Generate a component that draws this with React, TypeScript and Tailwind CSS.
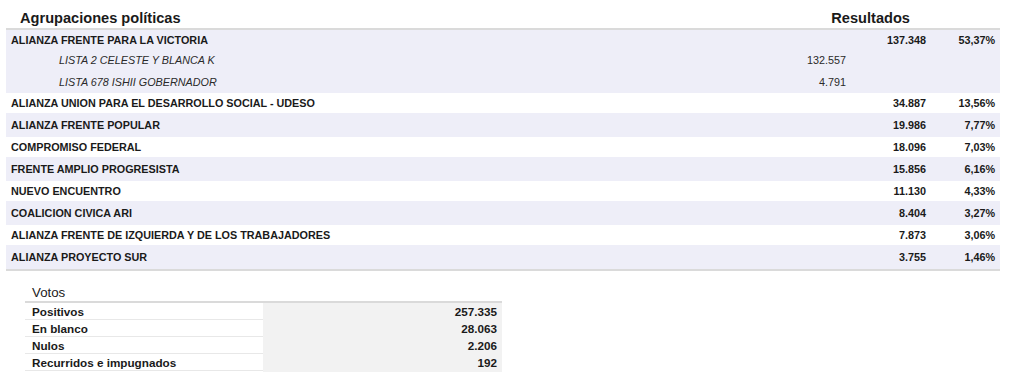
import React from 'react';

type Row = { name: string; votes: string; pct: string };

const LISTS = [
  { name: 'LISTA 2 CELESTE Y BLANCA K', votes: '132.557' },
  { name: 'LISTA 678 ISHII GOBERNADOR', votes: '4.791' },
];

const ROWS: Row[] = [
  { name: 'ALIANZA UNION PARA EL DESARROLLO SOCIAL - UDESO', votes: '34.887', pct: '13,56%' },
  { name: 'ALIANZA FRENTE POPULAR', votes: '19.986', pct: '7,77%' },
  { name: 'COMPROMISO FEDERAL', votes: '18.096', pct: '7,03%' },
  { name: 'FRENTE AMPLIO PROGRESISTA', votes: '15.856', pct: '6,16%' },
  { name: 'NUEVO ENCUENTRO', votes: '11.130', pct: '4,33%' },
  { name: 'COALICION CIVICA ARI', votes: '8.404', pct: '3,27%' },
  { name: 'ALIANZA FRENTE DE IZQUIERDA Y DE LOS TRABAJADORES', votes: '7.873', pct: '3,06%' },
  { name: 'ALIANZA PROYECTO SUR', votes: '3.755', pct: '1,46%' },
];

const VOTOS = [
  { label: 'Positivos', value: '257.335' },
  { label: 'En blanco', value: '28.063' },
  { label: 'Nulos', value: '2.206' },
  { label: 'Recurridos e impugnados', value: '192' },
];

const rowGrid = 'grid grid-cols-[765px_80px_80px_69px] items-center';

export default function App() {
  return (
    <div className="w-[1019px] h-[382px] bg-white overflow-hidden text-[#1a1a1a] font-['Liberation_Sans',Arial,sans-serif]">
      <div className="ml-[6px] w-[994px]">
        {/* header */}
        <div className="flex h-[30px] items-end justify-between border-b-2 border-[#dadada] pb-[2px]">
          <span className="pl-[14px] text-[14.6px] font-bold leading-none">Agrupaciones políticas</span>
          <span className="mr-[90px] text-[14.6px] font-bold leading-none">Resultados</span>
        </div>

        {/* first alliance with its lists */}
        <div className="bg-[#eeeef8]">
          <div className={`${rowGrid} h-[20px] text-[10.8px] font-bold`}>
            <span className="pl-[5px]">ALIANZA FRENTE PARA LA VICTORIA</span>
            <span />
            <span className="pr-[5px] text-right">137.348</span>
            <span className="pr-[5px] text-right">53,37%</span>
          </div>
          {LISTS.map((l, i) => (
            <div key={l.name} className={`${rowGrid} ${i === 0 ? 'h-[21px]' : 'h-[22px]'} text-[10.8px] text-[#2a2a2a]`}>
              <span className="pl-[53px] italic">{l.name}</span>
              <span className="pr-[5px] text-right">{l.votes}</span>
              <span />
              <span />
            </div>
          ))}
        </div>

        {ROWS.map((r, i) => (
          <div
            key={r.name}
            className={`${rowGrid} text-[10.8px] font-bold ${i % 2 === 1 ? 'h-[24px] bg-[#eeeef8]' : 'h-[20px] bg-white'}`}
          >
            <span className="pl-[5px]">{r.name}</span>
            <span />
            <span className="pr-[5px] text-right">{r.votes}</span>
            <span className="pr-[5px] text-right">{r.pct}</span>
          </div>
        ))}
        <div className="h-[2px] bg-[#dadada]" />
      </div>

      {/* votos */}
      <div className="ml-[25px] mt-[14px] w-[477px]">
        <div className="flex h-[18px] items-end border-b-2 border-[#dadada] pb-[2px] pl-[7px]">
          <span className="text-[13.3px] leading-none text-[#222]">Votos</span>
        </div>
        {VOTOS.map((v) => (
          <div key={v.label} className="grid h-[17px] grid-cols-[238px_239px] border-b border-[#e8e8e8] text-[11.7px] font-bold">
            <span className="flex items-center pl-[7px]">{v.label}</span>
            <span className="flex items-center justify-end bg-[#f2f2f2] pr-[5px]">{v.value}</span>
          </div>
        ))}
      </div>
    </div>
  );
}
